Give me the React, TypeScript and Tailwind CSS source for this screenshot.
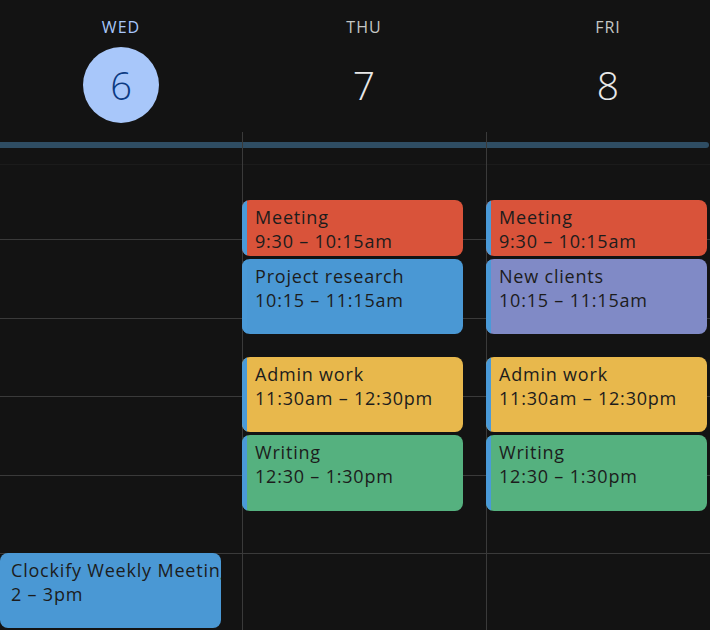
import React from "react";

type Ev = { title: string; time: string; start: number; end: number; color: string; stripe?: boolean };

const HOUR = 78.4;
const GRID_START = 9; // 9am at top of grid

const days: { label: string; num: string; today?: boolean; width: string; events: Ev[] }[] = [
  {
    label: "WED",
    num: "6",
    today: true,
    width: "w-[242px]",
    events: [
      { title: "Clockify Weekly Meeting", time: "2 – 3pm", start: 14, end: 15, color: "#4a98d4" },
    ],
  },
  {
    label: "THU",
    num: "7",
    width: "w-[244px]",
    events: [
      { title: "Meeting", time: "9:30 – 10:15am", start: 9.5, end: 10.25, color: "#d9533a", stripe: true },
      { title: "Project research", time: "10:15 – 11:15am", start: 10.25, end: 11.25, color: "#4a98d4", stripe: true },
      { title: "Admin work", time: "11:30am – 12:30pm", start: 11.5, end: 12.5, color: "#e8b84c", stripe: true },
      { title: "Writing", time: "12:30 – 1:30pm", start: 12.5, end: 13.5, color: "#55b17f", stripe: true },
    ],
  },
  {
    label: "FRI",
    num: "8",
    width: "w-[244px]",
    events: [
      { title: "Meeting", time: "9:30 – 10:15am", start: 9.5, end: 10.25, color: "#d9533a", stripe: true },
      { title: "New clients", time: "10:15 – 11:15am", start: 10.25, end: 11.25, color: "#808ac6", stripe: true },
      { title: "Admin work", time: "11:30am – 12:30pm", start: 11.5, end: 12.5, color: "#e8b84c", stripe: true },
      { title: "Writing", time: "12:30 – 1:30pm", start: 12.5, end: 13.5, color: "#55b17f", stripe: true },
    ],
  },
];

function Event({ ev, shift }: { ev: Ev; shift: boolean }) {
  const top = (ev.start - GRID_START) * HOUR;
  const height = (ev.end - ev.start) * HOUR - 3;
  return (
    <div
      className={`absolute ${shift ? "-left-[1px]" : "left-0"} w-[221px] rounded-[8px] overflow-hidden flex`}
      style={{ top, height, backgroundColor: ev.color }}
    >
      {ev.stripe && <div className="w-[5px] shrink-0 bg-[#4a9ad8]" />}
      <div
        className={`${ev.stripe ? "pl-[8px]" : "pl-[11px]"} pt-[5px] text-[#1c1c1c] text-[18px] leading-[24px] tracking-[0.8px] whitespace-nowrap overflow-hidden`}
      >
        <div>{ev.title}</div>
        <div>{ev.time}</div>
      </div>
    </div>
  );
}

export default function App() {
  return (
    <div
      className="w-[710px] h-[630px] bg-[#131313] overflow-hidden"
      style={{ fontFamily: '"Open Sans", "Noto Sans", sans-serif' }}
    >
      <div className="flex w-[730px]">
        {days.map((d, i) => (
          <div key={d.label} className={`${d.width} shrink-0 flex flex-col`}>
            {/* header */}
            <div className="h-[132px] flex flex-col items-center pt-[16px]">
              <div
                className={`text-[16px] leading-[22px] tracking-[1px] ${d.today ? "text-[#a8c7fa]" : "text-[#c4c7c5]"}`}
              >
                {d.label}
              </div>
              {d.today ? (
                <div className="mt-[9px] w-[76px] h-[76px] rounded-full bg-[#a8c7fa] flex items-center justify-center text-[38px] font-light text-[#0b3a82]">
                  {d.num}
                </div>
              ) : (
                <div className="mt-[9px] w-[76px] h-[76px] flex items-center justify-center text-[39px] font-light text-[#e8e8e8]">
                  {d.num}
                </div>
              )}
            </div>
            {/* band with bar */}
            <div className={`h-[33px] ${i > 0 ? "border-l border-[#3a3a3a]" : ""} border-b border-b-[#1b1b1b]`}>
              <div className={`mt-[10px] h-[6px] bg-[#2f4d63] ${i === 2 ? "w-[222px] rounded-r-full" : ""}`} />
            </div>
            {/* grid */}
            <div className={`relative -mt-[4px] ${i > 0 ? "border-l border-[#3a3a3a]" : ""}`}>
              <div className="h-[78.4px]" />
              {[0, 1, 2, 3, 4, 5].map((k) => (
                <div key={k} className="h-[78.4px] border-t border-[#3a3a3a]" />
              ))}
              {d.events.map((ev) => (
                <Event key={ev.title + ev.start} ev={ev} shift={i > 0} />
              ))}
            </div>
          </div>
        ))}
      </div>
    </div>
  );
}
